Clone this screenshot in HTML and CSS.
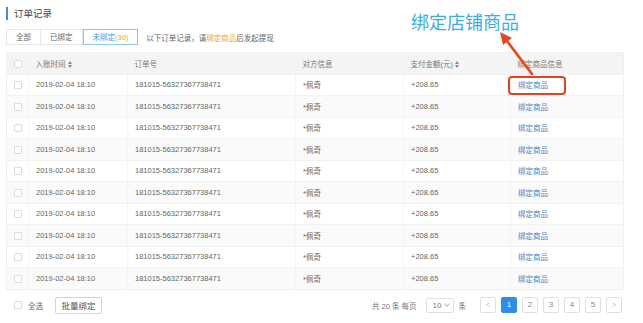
FILE: index.html
```html
<!DOCTYPE html>
<html lang="zh-CN">
<head>
    <meta charset="UTF-8">
    <meta name="viewport" content="width=device-width, initial-scale=1.0">
    <title>订单记录</title>
    <link rel="stylesheet" href="styles.css">
</head>
<body>
    <div class="page">
        <h2 class="page-title">订单记录</h2>

        <div class="toolbar">
            <div class="tabs">
                <span class="tab">全部</span>
                <span class="tab">已绑定</span>
                <span class="tab active">未绑定<em>(30)</em></span>
            </div>
            <p class="hint">以下订单记录，请<em>绑定商品</em>后发起提现</p>
        </div>

        <table class="orders">
            <thead>
                <tr>
                    <th class="col-check"><span class="checkbox"></span></th>
                    <th class="col-time">入账时间 <span class="sort"></span></th>
                    <th class="col-no">订单号</th>
                    <th class="col-party">对方信息</th>
                    <th class="col-amount">支付金额(元) <span class="sort"></span></th>
                    <th class="col-goods">绑定商品信息</th>
                </tr>
            </thead>
            <tbody>
                <tr>
                    <td class="col-check"><span class="checkbox"></span></td>
                    <td>2019-02-04 18:10</td>
                    <td>181015-56327367738471</td>
                    <td>*佩奇</td>
                    <td>+208.65</td>
                    <td><a class="bind-link highlight" href="#">绑定商品</a></td>
                </tr>
                <tr>
                    <td class="col-check"><span class="checkbox"></span></td>
                    <td>2019-02-04 18:10</td>
                    <td>181015-56327367738471</td>
                    <td>*佩奇</td>
                    <td>+208.65</td>
                    <td><a class="bind-link" href="#">绑定商品</a></td>
                </tr>
                <tr>
                    <td class="col-check"><span class="checkbox"></span></td>
                    <td>2019-02-04 18:10</td>
                    <td>181015-56327367738471</td>
                    <td>*佩奇</td>
                    <td>+208.65</td>
                    <td><a class="bind-link" href="#">绑定商品</a></td>
                </tr>
                <tr>
                    <td class="col-check"><span class="checkbox"></span></td>
                    <td>2019-02-04 18:10</td>
                    <td>181015-56327367738471</td>
                    <td>*佩奇</td>
                    <td>+208.65</td>
                    <td><a class="bind-link" href="#">绑定商品</a></td>
                </tr>
                <tr>
                    <td class="col-check"><span class="checkbox"></span></td>
                    <td>2019-02-04 18:10</td>
                    <td>181015-56327367738471</td>
                    <td>*佩奇</td>
                    <td>+208.65</td>
                    <td><a class="bind-link" href="#">绑定商品</a></td>
                </tr>
                <tr>
                    <td class="col-check"><span class="checkbox"></span></td>
                    <td>2019-02-04 18:10</td>
                    <td>181015-56327367738471</td>
                    <td>*佩奇</td>
                    <td>+208.65</td>
                    <td><a class="bind-link" href="#">绑定商品</a></td>
                </tr>
                <tr>
                    <td class="col-check"><span class="checkbox"></span></td>
                    <td>2019-02-04 18:10</td>
                    <td>181015-56327367738471</td>
                    <td>*佩奇</td>
                    <td>+208.65</td>
                    <td><a class="bind-link" href="#">绑定商品</a></td>
                </tr>
                <tr>
                    <td class="col-check"><span class="checkbox"></span></td>
                    <td>2019-02-04 18:10</td>
                    <td>181015-56327367738471</td>
                    <td>*佩奇</td>
                    <td>+208.65</td>
                    <td><a class="bind-link" href="#">绑定商品</a></td>
                </tr>
                <tr>
                    <td class="col-check"><span class="checkbox"></span></td>
                    <td>2019-02-04 18:10</td>
                    <td>181015-56327367738471</td>
                    <td>*佩奇</td>
                    <td>+208.65</td>
                    <td><a class="bind-link" href="#">绑定商品</a></td>
                </tr>
                <tr>
                    <td class="col-check"><span class="checkbox"></span></td>
                    <td>2019-02-04 18:10</td>
                    <td>181015-56327367738471</td>
                    <td>*佩奇</td>
                    <td>+208.65</td>
                    <td><a class="bind-link" href="#">绑定商品</a></td>
                </tr>
            </tbody>
        </table>

        <div class="footer">
            <div class="footer-left">
                <label class="select-all"><span class="checkbox"></span>全选</label>
                <button class="btn">批量绑定</button>
            </div>
            <div class="pager">
                <span class="pager-text">共 20 条 每页</span>
                <span class="page-size">10 <i class="chevron"></i></span>
                <span class="pager-text">条</span>
                <span class="page-btn">&lt;</span>
                <span class="page-btn current">1</span>
                <span class="page-btn">2</span>
                <span class="page-btn">3</span>
                <span class="page-btn">4</span>
                <span class="page-btn">5</span>
                <span class="page-btn">&gt;</span>
            </div>
        </div>

        <!-- annotation over the screenshot -->
        <div class="note">绑定店铺商品</div>
        <svg class="note-arrow" width="50" height="55" viewBox="0 0 50 55">
            <line x1="42" y1="47" x2="17" y2="14" stroke="#e8461e" stroke-width="2.6" stroke-linecap="round"/>
            <polygon points="10,5 22,11 13,18" fill="#e8461e"/>
        </svg>
    </div>
</body>
</html>
```

FILE: styles.css
```css
body {
    margin: 0;
    font-family: "Liberation Sans", "Noto Sans CJK SC", sans-serif;
    color: #666;
    background: #fff;
}
.page {
    position: relative;
    padding: 7px 20px 0 6px;
}
.page-title {
    margin: 0;
    padding-left: 6px;
    border-left: 2px solid #3d8fe0;
    font-size: 9.5px;
    font-weight: normal;
    line-height: 13px;
    color: #444;
}
.toolbar {
    display: flex;
    align-items: center;
    margin-top: 9px;
}
.tabs {
    display: flex;
}
.tab {
    height: 16px;
    line-height: 15px;
    padding: 0 9px;
    font-size: 7.5px;
    color: #666;
    border: 1px solid #e6e6e6;
    box-sizing: border-box;
}
.tab + .tab {
    border-left: none;
}
.tab.active {
    color: #3f9ded;
    border: 1px solid #8cc4f2;
}
.tab em,
.hint em {
    font-style: normal;
    color: #f5a623;
}
.hint {
    margin: 0 0 0 8px;
    font-size: 7.5px;
    color: #666;
}
.orders {
    width: 617px;
    margin-top: 7px;
    border-collapse: collapse;
    table-layout: fixed;
    font-size: 7.5px;
    border: 1px solid #f0f0f0;
}
.orders th,
.orders td {
    height: 21.5px;
    padding: 0 0 0 7px;
    text-align: left;
    font-weight: normal;
    white-space: nowrap;
    box-sizing: border-box;
}
.orders th {
    background: #f4f4f4;
    color: #777;
}
.orders td {
    border-top: 1px solid #f2f2f2;
    border-left: 1px solid #f4f4f4;
    color: #666;
}
.orders tbody tr:nth-child(even) td {
    background: #fafafa;
}
.orders .col-check {
    width: 22px;
    padding: 0;
    text-align: center;
    border-left: none;
}
.col-time { width: 99px; }
.col-no { width: 168px; }
.col-party { width: 108px; }
.col-amount { width: 107px; }
.col-goods { width: 113px; }
.checkbox {
    display: inline-block;
    width: 6px;
    height: 6px;
    border: 1px solid #dcdcdc;
    border-radius: 1px;
    background: #fff;
    vertical-align: middle;
}
.sort {
    display: inline-block;
    position: relative;
    width: 4px;
    height: 7px;
    vertical-align: middle;
}
.sort::before,
.sort::after {
    content: "";
    position: absolute;
    left: 0;
    border-left: 2px solid transparent;
    border-right: 2px solid transparent;
}
.sort::before {
    top: 0;
    border-bottom: 3px solid #888;
}
.sort::after {
    bottom: 0;
    border-top: 3px solid #888;
}
.bind-link {
    position: relative;
    color: #4f82c4;
    text-decoration: none;
}
.bind-link.highlight::after {
    content: "";
    position: absolute;
    left: -10px;
    right: -18px;
    top: -5px;
    bottom: -5px;
    border: 2px solid #e5441c;
    border-radius: 4px;
}
.footer {
    display: flex;
    justify-content: space-between;
    align-items: center;
    margin-top: 7px;
    font-size: 7.5px;
}
.footer-left {
    display: flex;
    align-items: center;
}
.select-all {
    display: flex;
    align-items: center;
    margin-left: 8px;
    color: #666;
}
.select-all .checkbox {
    margin-right: 6px;
}
.btn {
    margin-left: 12px;
    width: 47px;
    height: 17px;
    padding: 0;
    font-family: inherit;
    font-size: 8.5px;
    color: #555;
    background: #fff;
    border: 1px solid #d4d4d4;
    border-radius: 2px;
}
.pager {
    display: flex;
    align-items: center;
    gap: 5px;
    margin-right: 1px;
}
.pager-text {
    color: #777;
}
.page-size {
    display: flex;
    align-items: center;
    gap: 4px;
    width: 28px;
    height: 15px;
    margin: 0 0 0 4px;
    padding-left: 6px;
    box-sizing: border-box;
    font-size: 8px;
    color: #777;
    border: 1px solid #e0e0e0;
    border-radius: 2px;
}
.chevron {
    width: 3px;
    height: 3px;
    margin-top: -2px;
    border-right: 1px solid #bbb;
    border-bottom: 1px solid #bbb;
    transform: rotate(45deg);
}
.page-btn {
    width: 16px;
    height: 16px;
    line-height: 14px;
    text-align: center;
    font-size: 8px;
    color: #888;
    border: 1px solid #e0e0e0;
    border-radius: 2px;
    box-sizing: border-box;
}
.page-btn:nth-child(4) {
    margin-left: 9px;
    color: #bbb;
}
.page-btn:last-child {
    color: #bbb;
}
.page-btn.current {
    background: #2d8cf0;
    border-color: #2d8cf0;
    color: #fff;
}
.note {
    position: absolute;
    left: 411px;
    top: 11px;
    font-size: 18px;
    line-height: 20px;
    color: #3aaeea;
    font-family: "Noto Sans CJK SC", sans-serif;
}
.note-arrow {
    position: absolute;
    left: 490px;
    top: 27px;
}
```
